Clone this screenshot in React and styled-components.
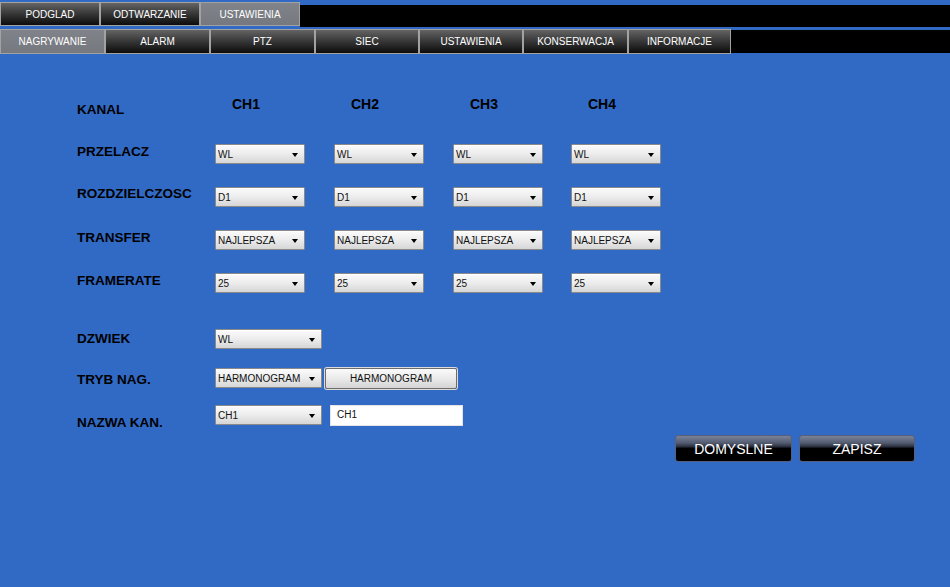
import React from "react";
import styled, { createGlobalStyle } from "styled-components";

const GlobalStyle = createGlobalStyle`
  html, body { margin: 0; padding: 0; }
  body {
    background: #316ac5;
    font-family: "Liberation Sans", Arial, sans-serif;
  }
  #root { width: 950px; height: 587px; overflow: hidden; }
`;

const Page = styled.div`
  width: 950px;
  height: 587px;
  background: #316ac5;
  display: flex;
  flex-direction: column;
`;

const TopBar = styled.div`
  display: flex;
  align-items: flex-start;
  box-sizing: border-box;
  padding-top: 2px;
  height: 27px;
`;

const SubBar = styled.div`
  display: flex;
  align-items: flex-start;
  margin-top: 2px;
  height: 25px;
`;

const Tab = styled.div`
  box-sizing: border-box;
  width: ${(p) => p.$w}px;
  height: ${(p) => p.$h}px;
  border: 1px solid #a2a2a2;
  display: flex;
  align-items: center;
  justify-content: center;
  font-size: 10px;
  color: #fff;
  letter-spacing: 0;
  background: ${(p) =>
    p.$active
      ? "linear-gradient(#80838a, #75787e)"
      : "linear-gradient(#646464 0%, #3a3a3a 45%, #0c0c0c 100%)"};
  white-space: nowrap;
`;

const Filler = styled.div`
  flex: 1;
  background: #000;
  margin-top: ${(p) => p.$top}px;
  height: ${(p) => p.$h}px;
`;

const Content = styled.div`
  padding: 42px 35px 0 77px;
`;

const FormGrid = styled.div`
  display: grid;
  grid-template-columns: 138px 119px 119px 118px 90px;
  grid-template-rows: 48px repeat(4, 43px);
`;

const LowerGrid = styled.div`
  display: grid;
  margin-top: 13px;
  grid-template-columns: 138px 110px auto;
  grid-template-rows: 39px 37px 21px;
  align-items: start;
`;

const Label = styled.div`
  font-size: 13.5px;
  font-weight: bold;
  line-height: 16px;
  color: #000;
  white-space: nowrap;
  margin-top: ${(p) => p.$dy || 0}px;
`;

const ChHead = styled.div`
  font-size: 14px;
  font-weight: bold;
  line-height: 16px;
  color: #000;
  padding-left: 17px;
`;

const SelectBox = styled.div`
  box-sizing: border-box;
  width: ${(p) => p.$w}px;
  height: 20px;
  border: 1px solid #8a8a8a;
  border-radius: 1px;
  background: linear-gradient(#fbfbfb 0%, #ececec 50%, #d6d6d6 100%);
  box-shadow: inset 0 1px 0 #ffffff;
  display: flex;
  align-items: center;
  justify-content: space-between;
  padding: 0 6px 0 2px;
  font-size: 10px;
  color: #111;
  white-space: nowrap;
`;

const Arrow = styled.span`
  width: 0;
  height: 0;
  border-left: 3.5px solid transparent;
  border-right: 3.5px solid transparent;
  border-top: 4px solid #000;
  margin-top: 2px;
`;

const LightButton = styled.div`
  box-sizing: border-box;
  width: 132px;
  height: 21px;
  border: 1px solid #6c6c6c;
  border-radius: 2px;
  box-shadow: 0 0 0 1px #dcdcdc;
  background: linear-gradient(#fafafa 0%, #eaeaea 50%, #d4d4d4 100%);
  display: flex;
  align-items: center;
  justify-content: center;
  font-size: 10px;
  color: #111;
`;

const TextInput = styled.div`
  box-sizing: border-box;
  width: 133px;
  height: 21px;
  margin-left: 5px;
  background: #fff;
  border: 1px solid #e4e4e4;
  font-size: 10px;
  color: #111;
  padding: 3px 0 0 6px;
`;

const ButtonRow = styled.div`
  display: flex;
  justify-content: flex-end;
  gap: 7px;
  margin-top: 9px;
`;

const DarkButton = styled.div`
  box-sizing: border-box;
  width: ${(p) => p.$w}px;
  height: 27px;
  border: 1px solid #56607a;
  border-radius: 3px;
  background: linear-gradient(
    #7a8399 0%,
    #535b70 28%,
    #2c3140 42%,
    #000 50%,
    #000 100%
  );
  display: flex;
  align-items: center;
  justify-content: center;
  font-size: 14px;
  color: #fff;
`;

const Select = ({ value, w = 90 }) => (
  <SelectBox $w={w}>
    <span>{value}</span>
    <Arrow />
  </SelectBox>
);

const mainTabs = [
  { t: "PODGLAD" },
  { t: "ODTWARZANIE" },
  { t: "USTAWIENIA", active: true },
];

const subTabs = [
  { t: "NAGRYWANIE", w: 105, active: true },
  { t: "ALARM", w: 105 },
  { t: "PTZ", w: 105 },
  { t: "SIEC", w: 104 },
  { t: "USTAWIENIA", w: 104 },
  { t: "KONSERWACJA", w: 105 },
  { t: "INFORMACJE", w: 103 },
];

const rows = [
  { label: "PRZELACZ", value: "WL", dy: 0 },
  { label: "ROZDZIELCZOSC", value: "D1", dy: -1 },
  { label: "TRANSFER", value: "NAJLEPSZA", dy: 0 },
  { label: "FRAMERATE", value: "25", dy: 0 },
];

export default function App() {
  return (
    <Page>
      <GlobalStyle />
      <TopBar>
        {mainTabs.map((m) => (
          <Tab key={m.t} $w={100} $h={24} $active={m.active}>
            {m.t}
          </Tab>
        ))}
        <Filler $top={3} $h={22} />
      </TopBar>
      <SubBar>
        {subTabs.map((s) => (
          <Tab key={s.t} $w={s.w} $h={25} $active={s.active}>
            {s.t}
          </Tab>
        ))}
        <Filler $top={1} $h={23} />
      </SubBar>
      <Content>
        <FormGrid>
          <Label $dy={6}>KANAL</Label>
          {["CH1", "CH2", "CH3", "CH4"].map((c) => (
            <ChHead key={c}>{c}</ChHead>
          ))}
          {rows.map((r) => (
            <React.Fragment key={r.label}>
              <Label $dy={r.dy}>{r.label}</Label>
              {[0, 1, 2, 3].map((i) => (
                <Select key={i} value={r.value} w={90} />
              ))}
            </React.Fragment>
          ))}
        </FormGrid>
        <LowerGrid>
          <Label $dy={2}>DZWIEK</Label>
          <Select value="WL" w={107} />
          <div />
          <Label $dy={4}>TRYB NAG.</Label>
          <Select value="HARMONOGRAM" w={107} />
          <LightButton>HARMONOGRAM</LightButton>
          <Label $dy={10}>NAZWA KAN.</Label>
          <Select value="CH1" w={107} />
          <TextInput>CH1</TextInput>
        </LowerGrid>
        <ButtonRow>
          <DarkButton $w={117}>DOMYSLNE</DarkButton>
          <DarkButton $w={116}>ZAPISZ</DarkButton>
        </ButtonRow>
      </Content>
    </Page>
  );
}
